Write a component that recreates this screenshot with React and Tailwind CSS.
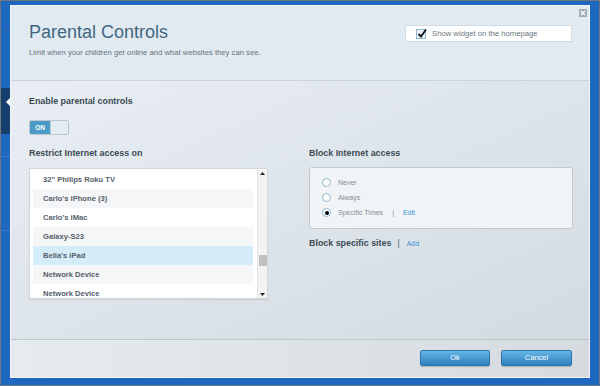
import React from "react";

const devices = [
  { name: '32" Philips Roku TV', bg: "bg-white" },
  { name: "Carlo's iPhone (3)", bg: "bg-[#f5f6f7]" },
  { name: "Carlo's iMac", bg: "bg-white" },
  { name: "Galaxy-S23", bg: "bg-[#f5f6f7]" },
  { name: "Bella's iPad", bg: "bg-[#d5edf8]" },
  { name: "Network Device", bg: "bg-[#f5f6f7]" },
  { name: "Network Device", bg: "bg-white" },
];

function Radio({ checked }) {
  return (
    <span className="w-[9px] h-[9px] rounded-full border border-[#8fb6cf] bg-white flex items-center justify-center shrink-0">
      {checked && <span className="w-[4px] h-[4px] rounded-full bg-black" />}
    </span>
  );
}

export default function App() {
  return (
    <div
      className="w-[600px] h-[386px] bg-[#1e68c2] border border-[#6c7782] pl-[9px] pt-[4px] overflow-hidden relative"
      style={{ fontFamily: '"Liberation Sans", Arial, sans-serif' }}
    >
      {/* left strip decorations */}
      <div className="absolute left-0 top-[87px] w-[9px] h-[46px] bg-[#163f6e]" />
      <div className="absolute left-[5px] top-[96px] w-0 h-0 border-y-[5px] border-y-transparent border-r-[5px] border-r-white" />
      <div className="absolute left-0 top-[28px] w-[9px] h-px bg-[#2b5f9e]" />
      <div className="absolute left-0 top-[155px] w-[9px] h-px bg-[#3a78c4]" />
      <div className="absolute left-0 top-[229px] w-[9px] h-px bg-[#3a78c4]" />

      <div className="w-[580px] h-[373px] border border-[#f3f6f9] flex flex-col relative">
        {/* close icon */}
        <div className="absolute right-[2px] top-[3px] w-[8px] h-[8px] bg-[#a3acb4] flex items-center justify-center text-white text-[7px] leading-none">
          <svg width="6" height="6" viewBox="0 0 6 6">
            <path d="M1 1L5 5M5 1L1 5" stroke="white" strokeWidth="1.2" />
          </svg>
        </div>

        {/* header */}
        <div className="h-[75px] shrink-0 bg-[#e2eaf1] border-b border-[#cbd4db] pl-[18px] pr-[17px] flex justify-between items-start">
          <div>
            <div className="mt-[16px] text-[18px] leading-[20px] text-[#3e6782]">Parental Controls</div>
            <div className="mt-[6px] text-[7.7px] leading-[10px] text-[#66747e]">
              Limit when your children get online and what websites they can see.
            </div>
          </div>
          <div className="mt-[19px] w-[167px] h-[17px] bg-white border border-[#d3dbe2] flex items-center pl-[10px]">
            <span className="w-[10px] h-[10px] border border-[#8fb6cf] bg-[#e8f3fa] relative shrink-0">
              <svg className="absolute -top-[2px] left-0" width="10" height="11" viewBox="0 0 10 11">
                <path d="M1.5 6L4 8.5L9 1.5" stroke="#111" strokeWidth="1.8" fill="none" />
              </svg>
            </span>
            <span className="ml-[6px] text-[7.7px] text-[#6a7780]">Show widget on the homepage</span>
          </div>
        </div>

        {/* body */}
        <div className="flex-1 bg-gradient-to-br from-[#e8eef3] to-[#d3dbe1] border-b border-[#bcc6cd] pl-[18px] pr-[16px]">
          <div className="mt-[15px] text-[8.9px] leading-[11px] font-bold text-[#3c4a55]">Enable parental controls</div>
          <div className="mt-[13px] w-[40px] h-[15px] flex rounded-[2px] overflow-hidden border border-[#bac7d0]">
            <div className="w-[20px] bg-[#4a9bc6] text-white text-[6.5px] font-bold flex items-center justify-center">ON</div>
            <div className="flex-1 bg-[#e3ecf2] border-l border-[#b9c9d4]" />
          </div>

          <div className="flex mt-[13px]">
            {/* left column */}
            <div className="w-[239px]">
              <div className="text-[8.9px] leading-[11px] font-bold text-[#3c4a55]">Restrict Internet access on</div>
              <div className="mt-[9px] h-[131px] bg-white border border-[#d0d8de] flex pt-[1px] pl-[3px] shadow-[0_1px_1px_rgba(0,0,0,0.08)]">
                <div className="w-[220px] h-[128px] overflow-hidden">
                  {devices.map((d, i) => (
                    <div
                      key={i}
                      className={`h-[19px] ${d.bg} pl-[10px] flex items-center text-[7.6px] font-bold text-[#55616b] whitespace-nowrap`}
                    >
                      {d.name}
                    </div>
                  ))}
                </div>
                <div className="ml-[4px] w-[10px] h-[128px] bg-[#f3f3f3] border-l border-[#e4e4e4] flex flex-col items-center justify-between py-[2px] relative">
                  <svg width="5" height="3" viewBox="0 0 5 3"><path d="M0 3L2.5 0L5 3Z" fill="#222" /></svg>
                  <div className="absolute left-[1px] top-[85px] w-[8px] h-[11px] bg-[#c0c0c0]" />
                  <svg width="5" height="3" viewBox="0 0 5 3"><path d="M0 0L2.5 3L5 0Z" fill="#222" /></svg>
                </div>
              </div>
            </div>

            {/* right column */}
            <div className="ml-[41px] w-[264px]">
              <div className="text-[8.9px] leading-[11px] font-bold text-[#3c4a55]">Block Internet access</div>
              <div className="mt-[8px] h-[62px] rounded-[3px] border border-[#c3cbd1] bg-[#f0f4f7] pl-[12px] pt-[10px] flex flex-col gap-[6px] text-[7px] leading-[9px] text-[#878e94]">
                <div className="flex items-center gap-[7px]"><Radio /><span>Never</span></div>
                <div className="flex items-center gap-[7px]"><Radio /><span>Always</span></div>
                <div className="flex items-center gap-[7px]">
                  <Radio checked />
                  <span>Specific Times</span>
                  <span className="ml-[2px]">|</span>
                  <span className="ml-[2px] text-[#3b8fd0]">Edit</span>
                </div>
              </div>
              <div className="mt-[9px] flex items-center text-[8.9px] leading-[11px]">
                <span className="font-bold text-[#3c4a55]">Block specific sites</span>
                <span className="ml-[6px] text-[#59656e]">|</span>
                <span className="ml-[7px] text-[7px] text-[#3b8fd0]">Add</span>
              </div>
            </div>
          </div>
        </div>

        {/* footer */}
        <div className="h-[37px] shrink-0 bg-gradient-to-r from-[#e6ebef] to-[#d5dbdf] flex justify-end items-start pt-[10px] pr-[17px] gap-[11px]">
          <button className="w-[70px] h-[16px] rounded-[2px] bg-gradient-to-b from-[#63b6e6] to-[#2f80be] border border-[#2f74ab] text-white text-[7.5px] shadow-[0_1px_1px_rgba(0,0,0,0.2)]">
            Ok
          </button>
          <button className="w-[71px] h-[16px] rounded-[2px] bg-gradient-to-b from-[#63b6e6] to-[#2f80be] border border-[#2f74ab] text-white text-[7.5px] shadow-[0_1px_1px_rgba(0,0,0,0.2)]">
            Cancel
          </button>
        </div>
      </div>
    </div>
  );
}
